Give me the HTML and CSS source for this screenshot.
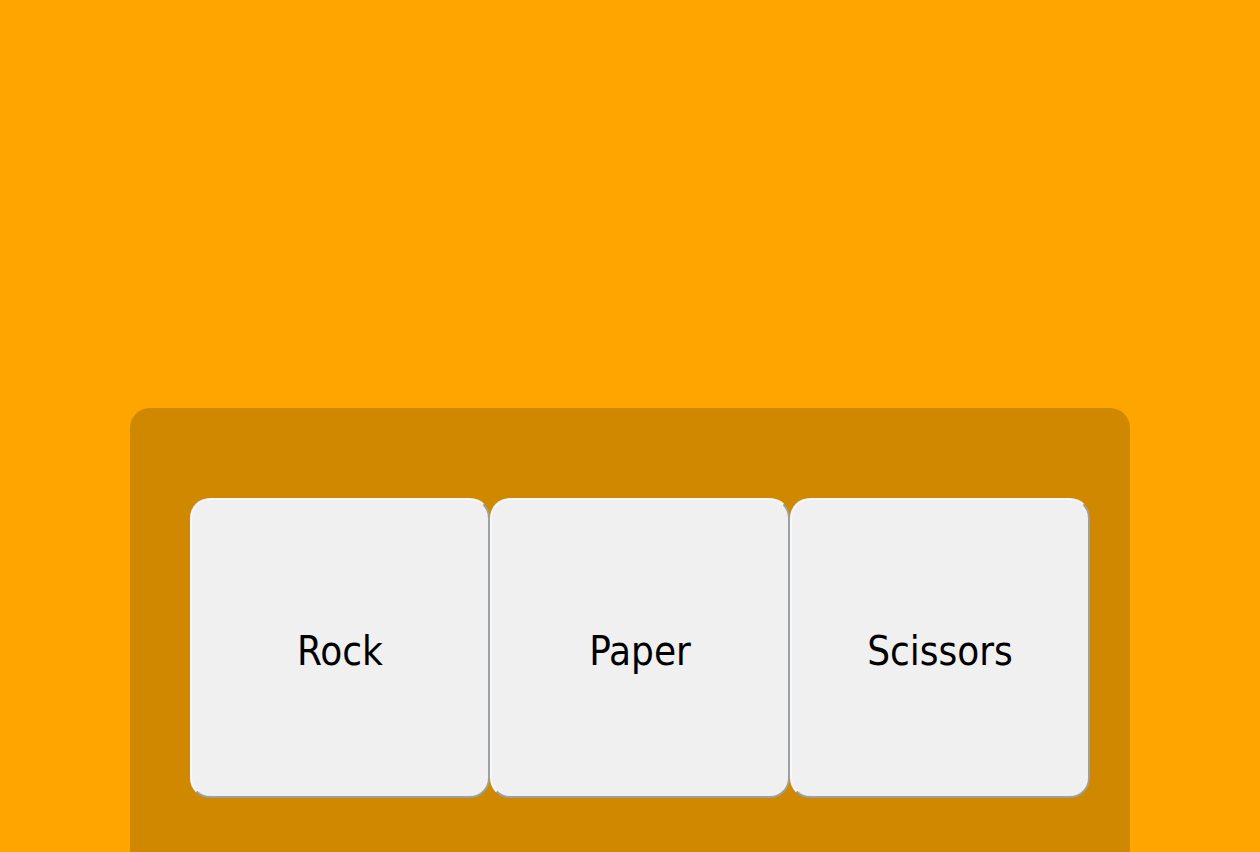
FILE: index.html
```html
<!DOCTYPE html>
<html lang="en">
<head>
  <meta charset="UTF-8" />
  <title>Rock Paper Scissors</title>
  <link rel="stylesheet" href="styles.css">
</head>
<body>
  <div id="game">
    <div class="choices">
      <button class="choice" data-move="rock">Rock</button>
      <button class="choice" data-move="paper">Paper</button>
      <button class="choice" data-move="scissors">Scissors</button>
    </div>
  </div>
</body>
</html>
```

FILE: styles.css
```css
body {
  margin: 8px;
  background: #ffa500;
  font-family: "DejaVu Sans Condensed", "DejaVu Sans", sans-serif;
  overflow: hidden;
}
#game {
  width: 1000px;
  height: 500px;
  margin: 400px auto 0;
  padding: 90px 0 0 60px;
  box-sizing: border-box;
  background: #d08800;
  border-radius: 20px 20px 0 0;
}
.choices {
  display: flex;
}
.choice {
  width: 300px;
  height: 300px;
  display: flex;
  align-items: center;
  justify-content: center;
  padding: 6px 0 0;
  background: #f0f0f0;
  border: 2px solid;
  border-color: #f7f7f7 #9aa0a4 #9aa0a4 #f7f7f7;
  border-radius: 20px;
  font-family: inherit;
  font-size: 40px;
  color: #000;
  cursor: pointer;
}
```
